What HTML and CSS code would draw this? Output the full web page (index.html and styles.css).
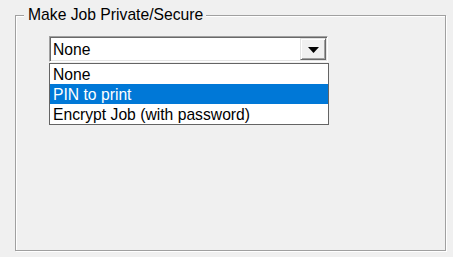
FILE: index.html
```html
<!DOCTYPE html>
<html>
<head>
<meta charset="utf-8">
<link rel="stylesheet" href="styles.css">
</head>
<body>
<div class="group">
  <div class="group-title">Make Job Private/Secure</div>
  <div class="combo-wrap">
    <div class="combo">
      <div class="combo-value">None</div>
      <div class="combo-btn">
        <svg width="11" height="6" viewBox="0 0 11 6"><path d="M0 0H11L5.5 6Z" fill="#000"/></svg>
      </div>
    </div>
    <ul class="list">
      <li class="item">None</li>
      <li class="item selected">PIN to print</li>
      <li class="item">Encrypt Job (with password)</li>
    </ul>
  </div>
</div>
</body>
</html>
```
FILE: styles.css
```css
html, body {
  margin: 0;
  padding: 0;
  background: #f0f0f0;
  font-family: "Liberation Sans", Arial, sans-serif;
  font-size: 15.7px;
  color: #000;
}
body {
  padding: 15px 0 0 15px;
  height: 257px;
  box-sizing: border-box;
  overflow: hidden;
}
.group {
  position: relative;
  width: 431px;
  height: 236px;
  box-sizing: border-box;
  border: 1px solid #a0a0a0;
  box-shadow: inset 1px 1px 0 #fff, 1px 1px 0 #fff;
  padding: 20px 0 0 33px;
}
.group-title {
  position: absolute;
  left: 8px;
  top: -10px;
  padding: 0 3px 0 4px;
  background: #f0f0f0;
  line-height: 18px;
  height: 18px;
}
.combo-wrap {
  width: 280px;
}
.combo {
  display: flex;
  width: 279px;
  height: 26px;
  box-sizing: border-box;
  background: #fff;
  border-style: solid;
  border-width: 1px;
  border-color: #a0a0a0 #fff #fff #a0a0a0;
  box-shadow: inset 1px 1px 0 #696969, inset -1px -1px 0 #e3e3e3;
  padding: 1px;
}
.combo-value {
  flex: 1;
  padding-left: 2px;
  line-height: 23px;
}
.combo-btn {
  width: 26px;
  height: 22px;
  box-sizing: border-box;
  background: #f0f0f0;
  border-style: solid;
  border-width: 1px;
  border-color: #e3e3e3 #696969 #696969 #e3e3e3;
  box-shadow: inset 1px 1px 0 #fff, inset -1px -1px 0 #a0a0a0;
  display: flex;
  align-items: center;
  justify-content: center;
}
.combo-btn svg {
  display: block;
  margin-top: 1px;
}
.list {
  list-style: none;
  margin: 1px 0 0 0;
  padding: 0;
  width: 280px;
  box-sizing: border-box;
  border: 1px solid #646464;
  background: #fff;
}
.item {
  height: 20px;
  line-height: 21px;
  padding-left: 3px;
  white-space: nowrap;
}
.item.selected {
  background: #0078d7;
  color: #fff;
}
```
